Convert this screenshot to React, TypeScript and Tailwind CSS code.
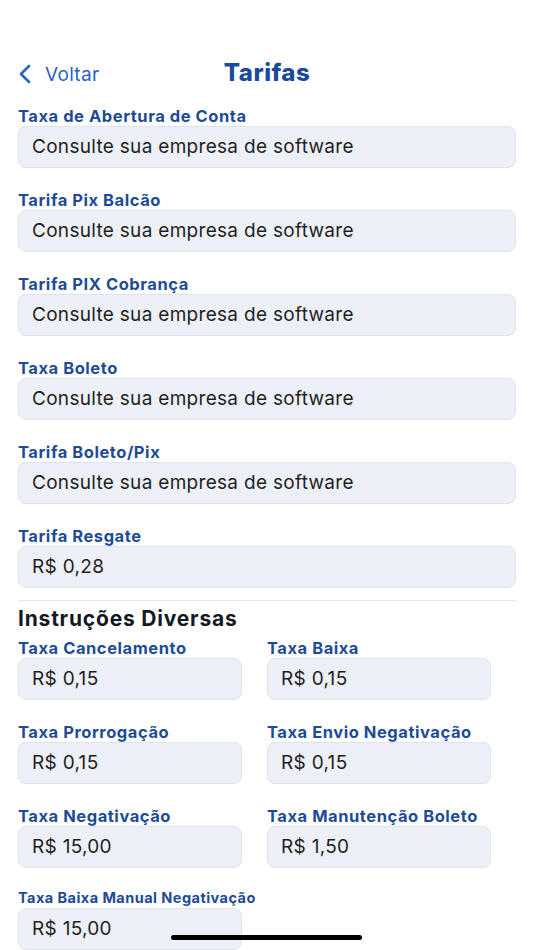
import React from "react";

const TOP_FIELDS = [
  { label: "Taxa de Abertura de Conta", value: "Consulte sua empresa de software" },
  { label: "Tarifa Pix Balcão", value: "Consulte sua empresa de software" },
  { label: "Tarifa PIX Cobrança", value: "Consulte sua empresa de software" },
  { label: "Taxa Boleto", value: "Consulte sua empresa de software" },
  { label: "Tarifa Boleto/Pix", value: "Consulte sua empresa de software" },
  { label: "Tarifa Resgate", value: "R$ 0,28" },
];

const PAIRS = [
  [
    { label: "Taxa Cancelamento", value: "R$ 0,15" },
    { label: "Taxa Baixa", value: "R$ 0,15" },
  ],
  [
    { label: "Taxa Prorrogação", value: "R$ 0,15" },
    { label: "Taxa Envio Negativação", value: "R$ 0,15" },
  ],
  [
    { label: "Taxa Negativação", value: "R$ 15,00" },
    { label: "Taxa Manutenção Boleto", value: "R$ 1,50" },
  ],
];

function Field({ label, value, small }: { label: string; value: string; small?: boolean }) {
  return (
    <div className="flex flex-col">
      <span
        className={`font-bold text-[#1d4b98] leading-5 h-5 whitespace-nowrap ${
          small ? "text-[14.5px] tracking-[0.45px]" : "text-[16.5px] tracking-[0.55px]"
        }`}
      >
        {label}
      </span>
      <div className="h-[42px] rounded-lg border border-[#dde4ee] bg-[#edf1f7] flex items-center px-[13px] text-[19px] tracking-[0.3px] text-[#1f1f1f]">
        {value}
      </div>
    </div>
  );
}

export default function App() {
  return (
    <div className="relative w-[534px] h-[950px] overflow-hidden bg-white font-['Inter','Noto_Sans',sans-serif]">
      {/* header */}
      <div className="relative h-[64px] mt-[42px] flex items-center">
        <div className="absolute left-[16px] top-[21px] flex items-center gap-[11px] text-[#2a63c4]">
          <svg width="18" height="22" viewBox="0 0 18 22" fill="none">
            <path d="M13 3 L5 11 L13 19" stroke="currentColor" strokeWidth="2.6" strokeLinecap="round" strokeLinejoin="round" />
          </svg>
          <span className="text-[19px] tracking-[0.3px] leading-none">Voltar</span>
        </div>
        <h1 className="absolute left-0 right-0 top-[19px] text-center text-[24px] tracking-[0.5px] leading-none font-extrabold text-[#1a4a9a]">
          Tarifas
        </h1>
      </div>

      <div className="px-[18px]">
        <div className="flex flex-col gap-[22px]">
          {TOP_FIELDS.map((f) => (
            <Field key={f.label} label={f.label} value={f.value} />
          ))}
        </div>

        <div className="h-px bg-[#e3e6ea] mt-[12px]" />

        <h2 className="mt-[5px] text-[21px] tracking-[0.8px] leading-[26px] font-bold text-[#141a24]">
          Instruções Diversas
        </h2>

        <div className="mt-[6px] flex flex-col gap-[22px] w-[473px]">
          {PAIRS.map((row, i) => (
            <div key={i} className="grid grid-cols-[224px_224px] gap-[25px]">
              {row.map((f) => (
                <Field key={f.label} label={f.label} value={f.value} />
              ))}
            </div>
          ))}
          <div className="w-[224px] -mt-[2px]">
            <Field label="Taxa Baixa Manual Negativação" value="R$ 15,00" small />
          </div>
        </div>
      </div>

      {/* home indicator */}
      <div className="absolute left-[171px] top-[935px] w-[191px] h-[5px] rounded-full bg-black" />
    </div>
  );
}
